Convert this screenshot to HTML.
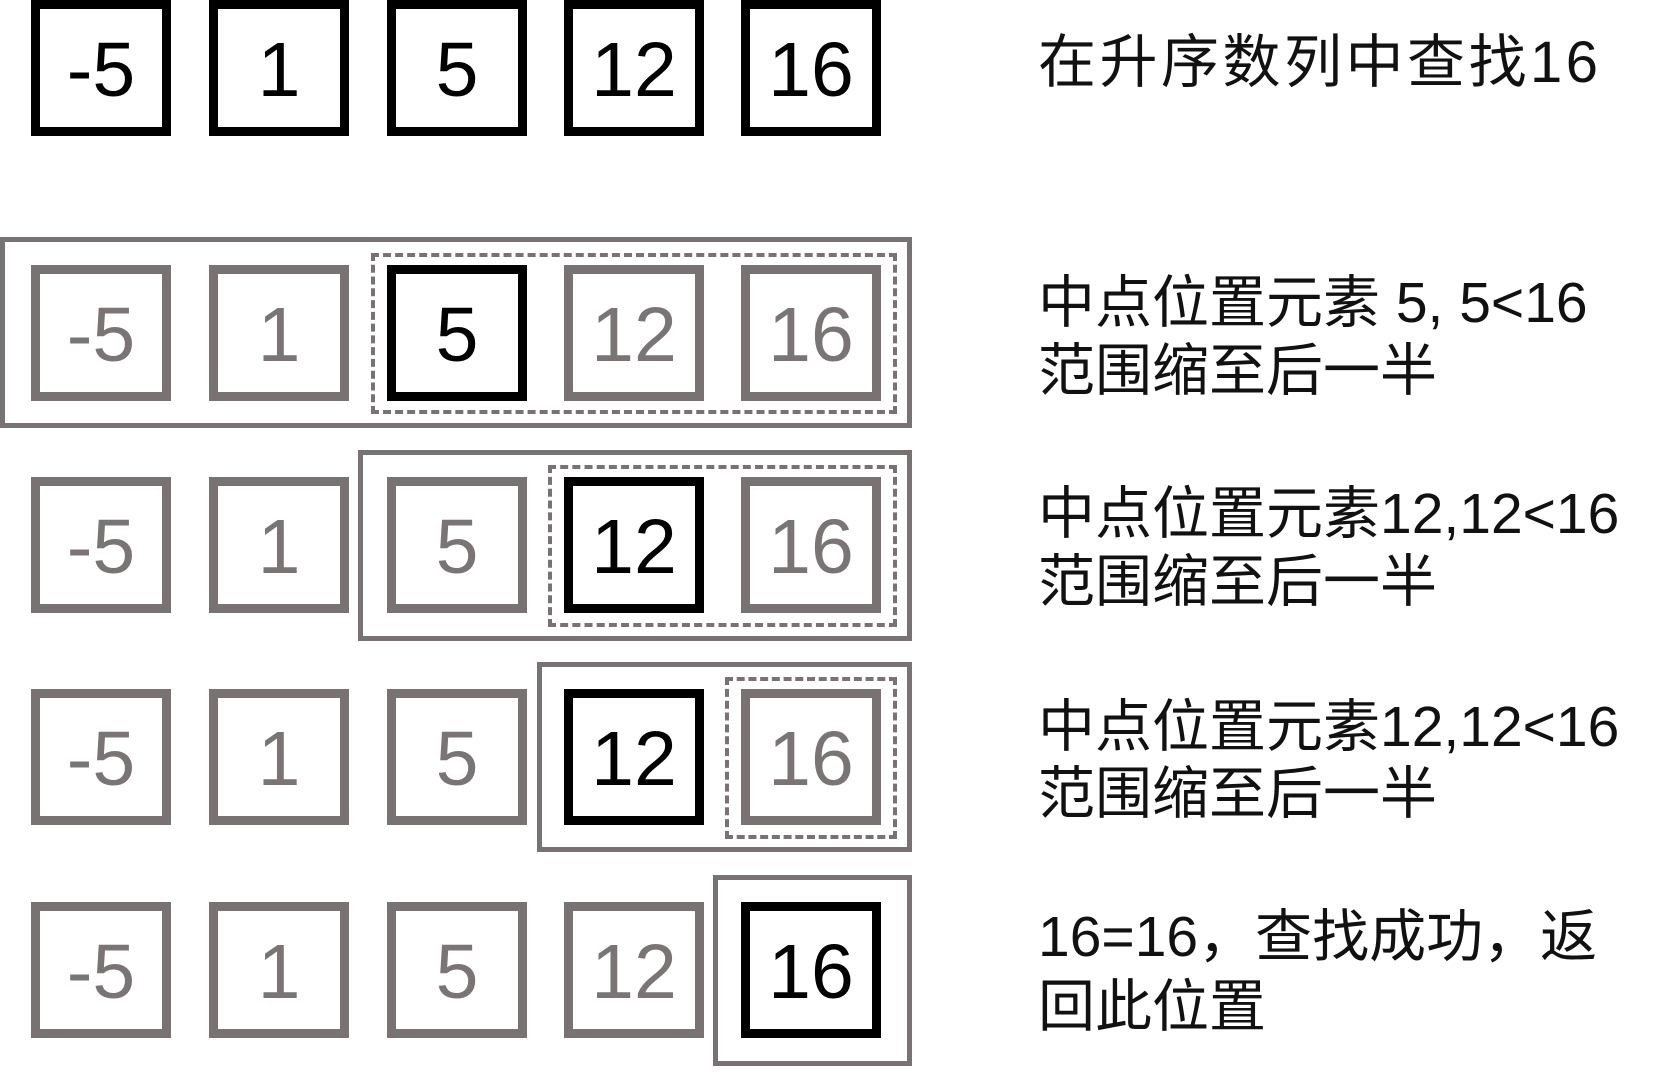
<!DOCTYPE html>
<html><head><meta charset="utf-8"><style>
html,body{margin:0;padding:0;background:#fff;width:1656px;height:1073px;overflow:hidden;position:relative}
.b{position:absolute;width:122px;height:118px;border:9px solid #787372;color:#7a7574;font:77px/122px "Liberation Sans",sans-serif;text-align:center;box-sizing:content-box}
.k{border-color:#000;color:#000}
.f{position:absolute;border:5px solid #787372;box-sizing:border-box}
.d{position:absolute;border:4px dashed #787372;box-sizing:border-box}
.t{position:absolute;left:1038px;font:57px/57px "Liberation Sans","Noto Sans CJK SC",sans-serif;color:#111;white-space:nowrap}
</style></head><body>

<div class="f" style="left:0;top:237px;width:912px;height:191px"></div>
<div class="d" style="left:371px;top:253px;width:526px;height:161px"></div>
<div class="f" style="left:358px;top:450px;width:554px;height:191px"></div>
<div class="d" style="left:548px;top:465px;width:349px;height:162px"></div>
<div class="f" style="left:537px;top:662px;width:375px;height:190px"></div>
<div class="d" style="left:725px;top:677px;width:172px;height:162px"></div>
<div class="f" style="left:713px;top:875px;width:199px;height:191px"></div>

<!-- row 1 -->
<div class="b k" style="left:31px;top:0px">-5</div>
<div class="b k" style="left:209px;top:0px">1</div>
<div class="b k" style="left:387px;top:0px">5</div>
<div class="b k" style="left:564px;top:0px">12</div>
<div class="b k" style="left:741px;top:0px">16</div>
<!-- row 2 -->
<div class="b" style="left:31px;top:265px">-5</div>
<div class="b" style="left:209px;top:265px">1</div>
<div class="b k" style="left:387px;top:265px">5</div>
<div class="b" style="left:564px;top:265px">12</div>
<div class="b" style="left:741px;top:265px">16</div>
<!-- row 3 -->
<div class="b" style="left:31px;top:477px">-5</div>
<div class="b" style="left:209px;top:477px">1</div>
<div class="b" style="left:387px;top:477px">5</div>
<div class="b k" style="left:564px;top:477px">12</div>
<div class="b" style="left:741px;top:477px">16</div>
<!-- row 4 -->
<div class="b" style="left:31px;top:689px">-5</div>
<div class="b" style="left:209px;top:689px">1</div>
<div class="b" style="left:387px;top:689px">5</div>
<div class="b k" style="left:564px;top:689px">12</div>
<div class="b" style="left:741px;top:689px">16</div>
<!-- row 5 -->
<div class="b" style="left:31px;top:902px">-5</div>
<div class="b" style="left:209px;top:902px">1</div>
<div class="b" style="left:387px;top:902px">5</div>
<div class="b" style="left:564px;top:902px">12</div>
<div class="b k" style="left:741px;top:902px">16</div>

<div class="t" style="top:34px;font-size:58px;line-height:58px;letter-spacing:3.5px">在升序数列中查找16</div>
<div class="t" style="top:275px">中点位置元素 5, 5&lt;16</div>
<div class="t" style="top:343px">范围缩至后一半</div>
<div class="t" style="top:486px">中点位置元素12,12&lt;16</div>
<div class="t" style="top:554px">范围缩至后一半</div>
<div class="t" style="top:699px">中点位置元素12,12&lt;16</div>
<div class="t" style="top:766px">范围缩至后一半</div>
<div class="t" style="top:909px">16=16，查找成功，返</div>
<div class="t" style="top:979px">回此位置</div>
</body></html>
